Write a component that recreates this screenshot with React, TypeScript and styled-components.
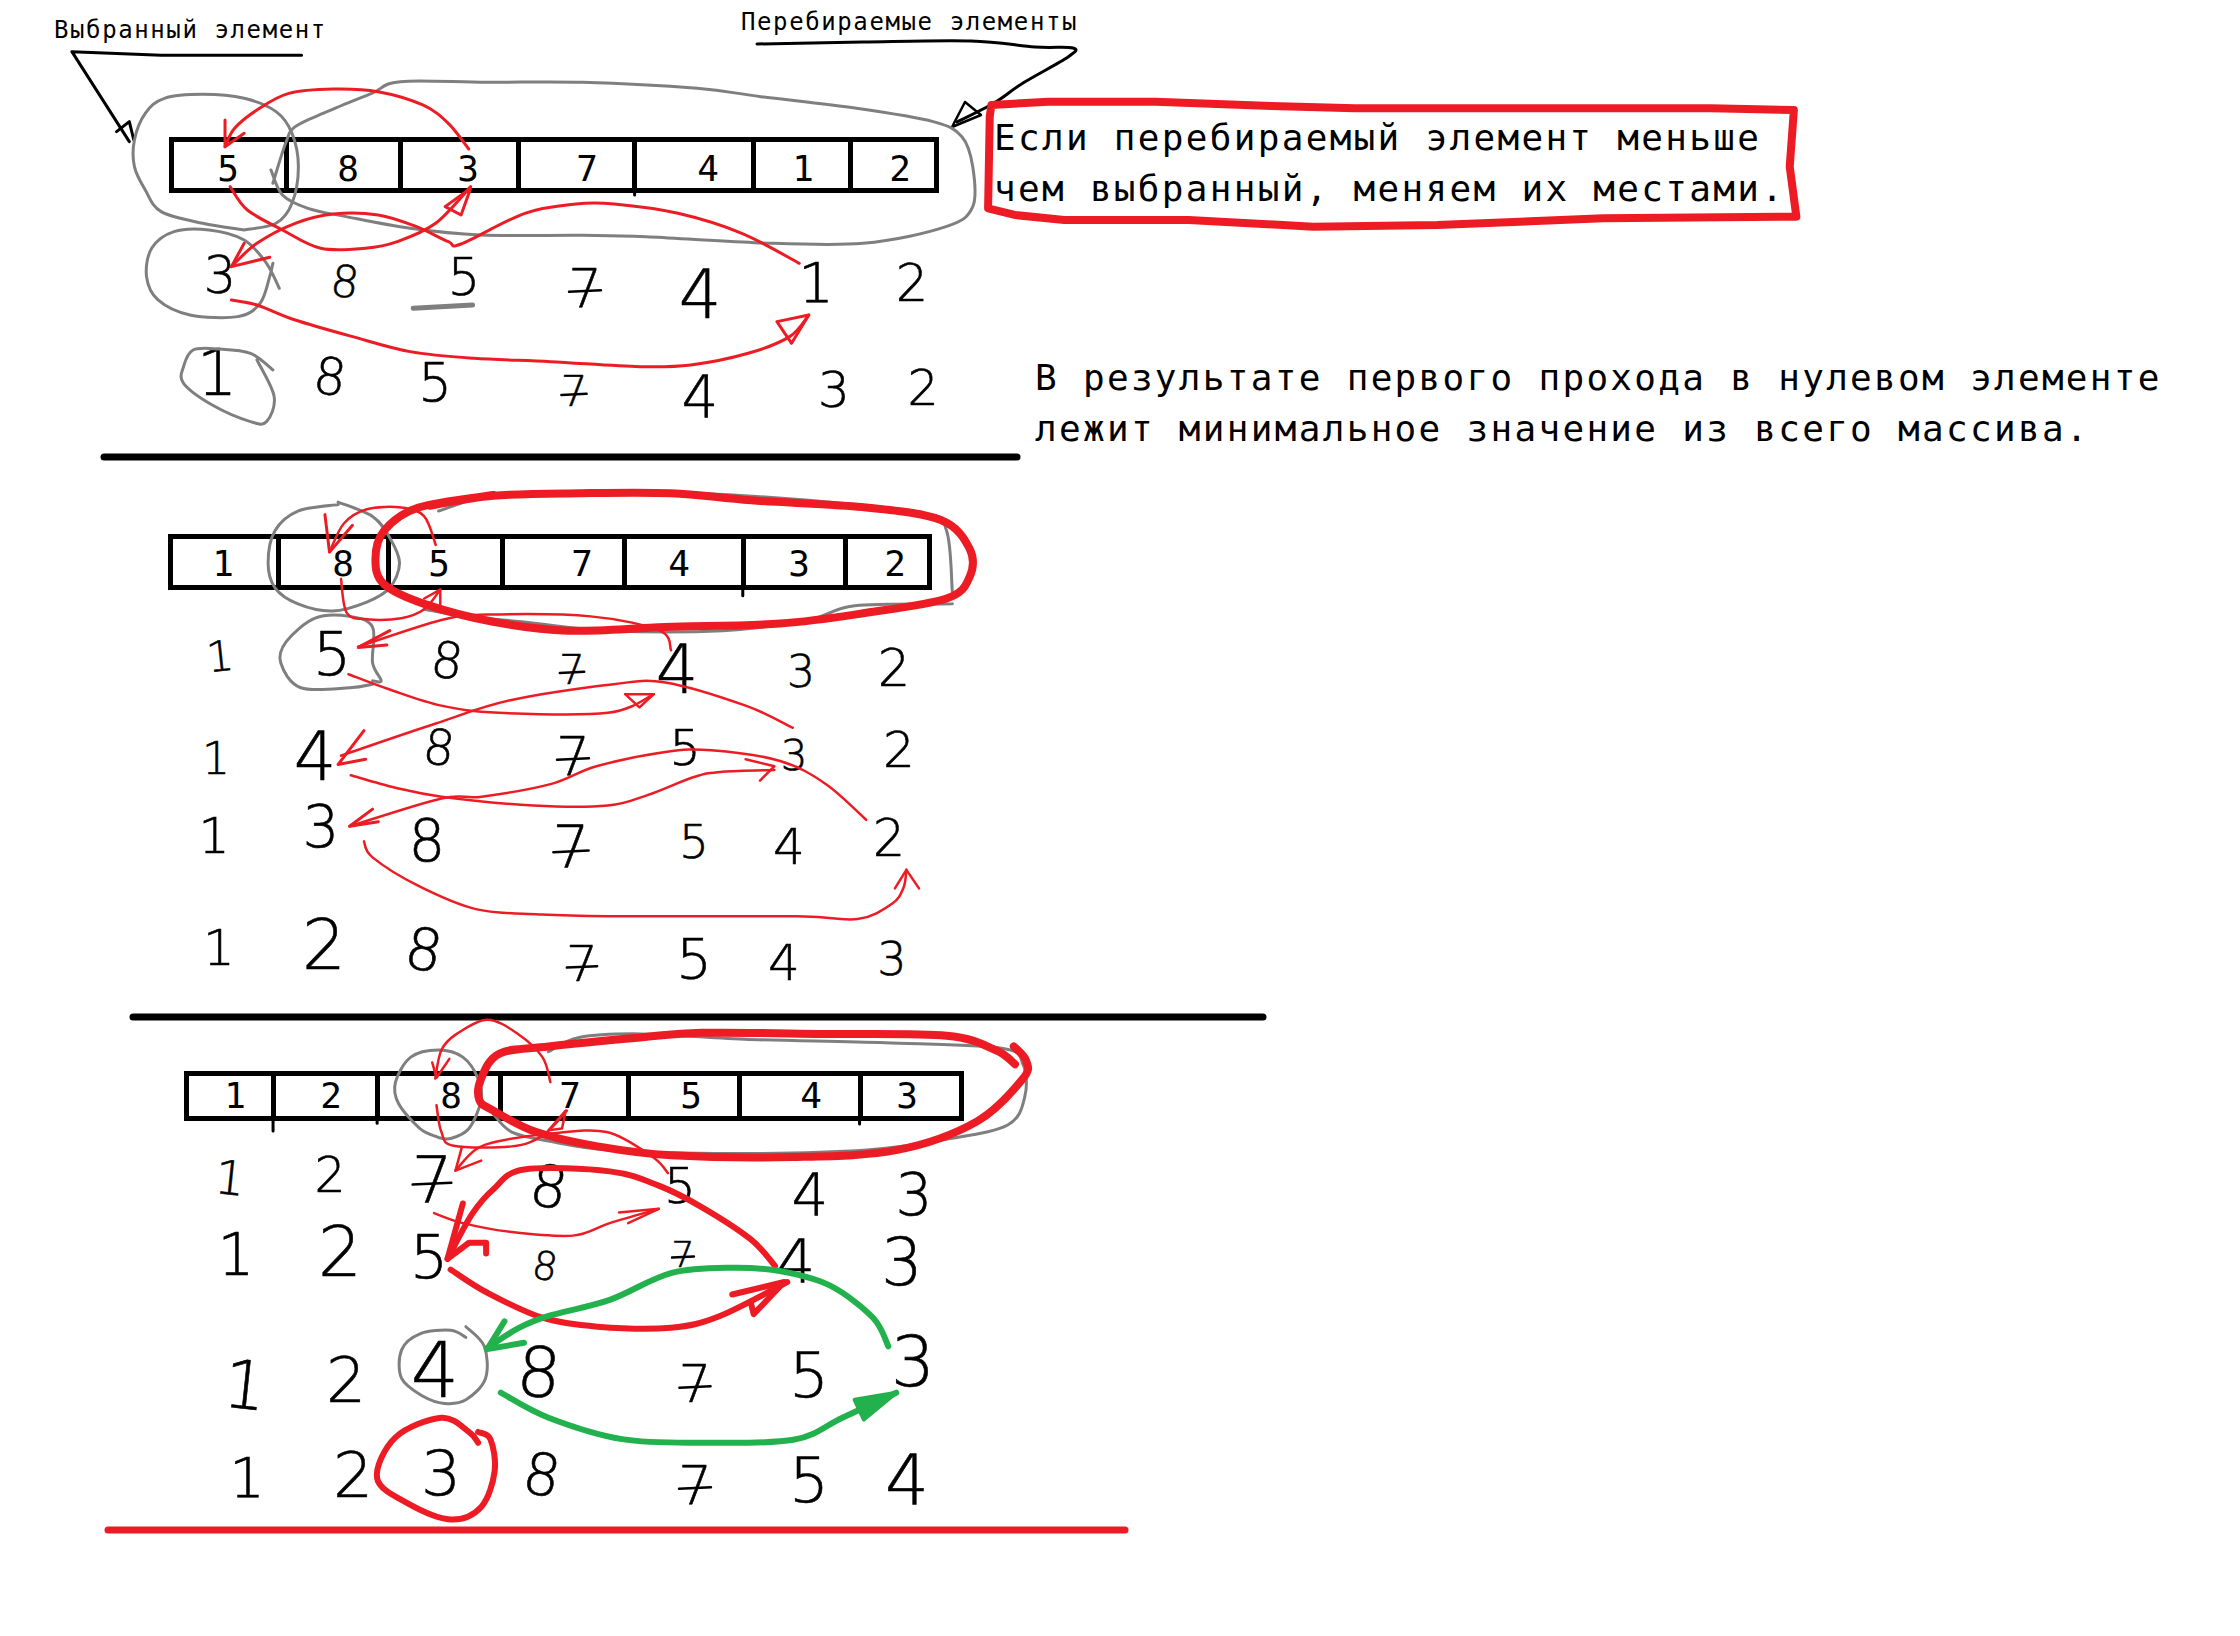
import React from 'react';
import styled, { createGlobalStyle } from 'styled-components';

const RED = '#ed1c24';
const GREEN = '#22b14c';
const GREY = '#7f7f7f';
const BLACK = '#000000';

type Pt = [number, number];
interface Stroke {
  c: string;
  w: number;
  p: Pt[];
  straight?: boolean;
  fill?: boolean;
}

// catmull-rom so the traced points come out like a mouse drawn line
const smooth = (p: Pt[]) => {
  let d = `M${p[0][0]} ${p[0][1]}`;
  for (let i = 0; i < p.length - 1; i++) {
    const a = p[i - 1] || p[i];
    const b = p[i];
    const c = p[i + 1];
    const e = p[i + 2] || c;
    d += ` C${b[0] + (c[0] - a[0]) / 6} ${b[1] + (c[1] - a[1]) / 6} ${c[0] - (e[0] - b[0]) / 6} ${c[1] - (e[1] - b[1]) / 6} ${c[0]} ${c[1]}`;
  }
  return d;
};
const straight = (p: Pt[]) => 'M' + p.map((q) => q.join(' ')).join(' L');

const head = (c: string, w: number, p: Pt[], fill = false): Stroke => ({ c, w, p, straight: true, fill });

// char, centre x, centre y, height, tilt
type Hand = [string, number, number, number, number?];
const handDigits: Hand[] = [
  ['3', 220, 275, 37], ['8', 345, 282, 32, 8], ['5', 464, 277, 37], ['7', 585, 288, 38], ['4', 700, 295, 48], ['1', 816, 283, 40], ['2', 912, 283, 37],
  ['1', 217, 373, 46], ['8', 330, 377, 37, 8], ['5', 435, 382, 38], ['7', 574, 392, 30], ['4', 700, 397, 42], ['3', 834, 390, 36], ['2', 923, 388, 35],
  ['1', 220, 657, 30, -6], ['5', 332, 654, 43], ['8', 447, 661, 36, 8], ['7', 572, 670, 29], ['4', 677, 670, 48], ['3', 801, 672, 32], ['2', 894, 668, 37],
  ['1', 216, 759, 32], ['4', 315, 757, 48], ['8', 439, 748, 35, 8], ['7', 573, 756, 38], ['5', 685, 748, 35], ['3', 794, 756, 30], ['2', 899, 750, 36],
  ['1', 214, 836, 35], ['3', 321, 827, 42], ['8', 427, 841, 42], ['7', 571, 848, 42], ['5', 694, 841, 34], ['4', 789, 847, 36], ['2', 889, 838, 37],
  ['1', 219, 948, 36], ['2', 324, 945, 50], ['8', 424, 950, 42, 10], ['7', 582, 964, 36], ['5', 694, 959, 40], ['4', 784, 963, 36], ['3', 892, 959, 33],
  ['1', 230, 1178, 34, 6], ['2', 330, 1175, 35], ['7', 432, 1180, 46], ['8', 549, 1187, 42, 10], ['5', 680, 1186, 36], ['4', 810, 1195, 42], ['3', 914, 1195, 42],
  ['1', 236, 1255, 42], ['2', 340, 1252, 50], ['5', 429, 1257, 43], ['8', 545, 1266, 28, 10], ['7', 683, 1255, 26], ['4', 796, 1261, 44], ['3', 902, 1262, 47],
  ['1', 245, 1386, 48, 6], ['2', 346, 1380, 45], ['4', 435, 1371, 55], ['8', 539, 1373, 50, 5], ['7', 695, 1384, 37], ['5', 809, 1375, 45], ['3', 913, 1362, 50],
  ['1', 247, 1478, 40], ['2', 353, 1475, 45], ['3', 441, 1473, 45], ['8', 542, 1475, 42, 10], ['7', 695, 1485, 38], ['5', 809, 1480, 45], ['4', 907, 1480, 50],
];

// the hand drawn sevens are crossed
const crossBars: Stroke[] = handDigits
  .filter((d) => d[0] === '7')
  .map(([, x, y, h]) => ({
    c: BLACK,
    w: 2.5,
    straight: true,
    p: [[x - h * 0.42, y + h * 0.1], [x + h * 0.42, y + h * 0.06]] as Pt[],
  }));

const fullStrokes: Stroke[] = [
  ...crossBars,
  { c: BLACK, w: 3, p: [[757, 44], [863, 42], [971, 41], [1035, 47], [1073, 48], [1068, 57], [1023, 83], [994, 103], [957, 122]] },
  head(BLACK, 2.5, [[965, 102], [952, 127], [981, 115], [965, 102]]),
  { c: BLACK, w: 7, straight: true, p: [[104, 457], [1017, 457]] },
  { c: BLACK, w: 7, straight: true, p: [[133, 1017], [1263, 1017]] },
  { c: RED, w: 7, straight: true, p: [[108, 1530], [1125, 1530]] },
];

const topStrokes: Stroke[] = [
  { c: BLACK, w: 3, straight: true, p: [[410, 166], [190, 166], [50, 155], [95, 290], [140, 425]] },
  head(BLACK, 3, [[120, 395], [140, 365], [147, 420]]),
  { c: BLACK, w: 3, straight: true, p: [[932, 575], [932, 585]] },
  { c: GREY, w: 3, p: [[320, 690], [255, 670], [190, 635], [165, 570], [148, 500], [148, 420], [165, 340], [195, 295], [255, 283], [320, 295], [370, 335], [395, 400], [405, 500], [395, 610], [370, 670], [320, 690]] },
  { c: GREY, w: 3, p: [[365, 550], [385, 430], [400, 380], [450, 335], [520, 280], [565, 245], [700, 247], [850, 247], [1030, 265], [1130, 290], [1280, 325], [1400, 365], [1445, 410], [1462, 500], [1462, 620], [1420, 680], [1290, 730], [1120, 728], [950, 710], [850, 706], [690, 705], [580, 685], [480, 650], [420, 625], [380, 585], [362, 510]] },
  { c: GREY, w: 3, p: [[375, 865], [355, 790], [320, 720], [265, 690], [210, 695], [175, 745], [167, 830], [185, 900], [235, 945], [310, 950], [345, 910], [360, 830], [365, 790]] },
  { c: GREY, w: 3, p: [[365, 1110], [330, 1060], [280, 1047], [240, 1050], [225, 1100], [225, 1150], [270, 1215], [330, 1265], [355, 1265], [367, 1190], [340, 1080]] },
  { c: GREY, w: 5, straight: true, p: [[585, 925], [678, 915]] },
  { c: RED, w: 3, p: [[672, 447], [640, 370], [600, 315], [530, 275], [460, 267], [390, 280], [340, 330], [305, 385], [290, 440]] },
  head(RED, 3, [[290, 360], [290, 440], [320, 400]]),
  { c: RED, w: 3, p: [[298, 560], [325, 630], [380, 690], [440, 745], [510, 745], [560, 725], [620, 670], [675, 560]] },
  head(RED, 3, [[635, 620], [675, 565], [660, 645], [635, 620]]),
  { c: RED, w: 3, p: [[1190, 790], [1100, 700], [1000, 640], [900, 612], [840, 612], [760, 640], [660, 732], [640, 725], [590, 680], [530, 645], [460, 642], [400, 670], [340, 730], [300, 800]] },
  head(RED, 3, [[320, 730], [300, 800], [360, 772]]),
  { c: RED, w: 3, p: [[300, 900], [340, 915], [400, 960], [490, 1010], [580, 1055], [680, 1075], [800, 1085], [940, 1100], [1020, 1095], [1110, 1060], [1175, 1010], [1205, 945]] },
  head(RED, 3, [[1155, 965], [1205, 945], [1178, 1030], [1155, 965]]),
];

const noteStrokes: Stroke[] = [
  { c: RED, w: 8, straight: true, p: [[60, 350], [62, 315], [130, 305], [260, 305], [400, 318], [500, 325], [930, 325], [1030, 330], [1025, 500], [1033, 650], [800, 655], [600, 675], [450, 680], [300, 660], [150, 660], [90, 645], [58, 625], [60, 350]] },
];

const midStrokes: Stroke[] = [
  { c: BLACK, w: 3, straight: true, p: [[1085, 330], [1085, 352]] },
  { c: GREY, w: 3, p: [[380, 90], [440, 130], [470, 190], [487, 260], [470, 330], [430, 370], [370, 395], [310, 375], [270, 330], [258, 260], [270, 170], [310, 115], [380, 97]] },
  { c: GREY, w: 3, p: [[555, 115], [650, 70], [800, 60], [1000, 65], [1200, 85], [1400, 120], [1440, 170], [1450, 340]] },
  { c: GREY, w: 3, p: [[1450, 375], [1280, 380], [1200, 420], [1050, 450], [850, 450], [700, 425], [600, 410], [530, 390]] },
  { c: GREY, w: 3, p: [[440, 590], [455, 590], [440, 540], [440, 440], [400, 410], [340, 415], [290, 480], [280, 540], [315, 610], [400, 610], [440, 600]] },
  { c: RED, w: 8, p: [[540, 100], [650, 72], [800, 65], [960, 65], [1100, 85], [1300, 105], [1430, 140], [1480, 220], [1480, 300], [1440, 360], [1300, 400], [1150, 430], [950, 440], [780, 450], [650, 425], [530, 375], [460, 320], [445, 250], [460, 170], [520, 105], [650, 70]] },
  { c: RED, w: 2.5, p: [[550, 210], [530, 130], [490, 105], [430, 110], [390, 150], [365, 230]] },
  head(RED, 3, [[357, 125], [365, 230], [405, 155]]),
  { c: RED, w: 2.5, p: [[385, 305], [395, 400], [430, 418], [490, 415], [530, 390], [558, 335]] },
  head(RED, 2.5, [[530, 360], [558, 335], [558, 390]]),
  { c: RED, w: 2.5, p: [[960, 505], [940, 450], [820, 410], [640, 405], [560, 420], [415, 495]] },
  head(RED, 3, [[470, 450], [415, 497], [465, 490]]),
  { c: RED, w: 2.5, p: [[398, 572], [470, 615], [560, 660], [660, 680], [850, 680], [930, 628]] },
  head(RED, 2.5, [[880, 628], [930, 628], [905, 665], [880, 628]]),
  { c: RED, w: 2.5, p: [[1172, 722], [1090, 660], [950, 595], [860, 600], [680, 645], [550, 710], [385, 800]] },
  head(RED, 3, [[425, 730], [380, 825], [428, 810]]),
  { c: RED, w: 2.5, p: [[402, 855], [480, 890], [560, 915], [720, 940], [850, 940], [920, 910], [1000, 860], [1050, 845], [1140, 840]] },
  head(RED, 2.5, [[1090, 810], [1140, 830], [1115, 870]]),
  { c: RED, w: 2.5, p: [[1300, 980], [1230, 880], [1150, 815], [1030, 785], [950, 790], [830, 830], [750, 880], [630, 915], [560, 920], [400, 998]] },
  head(RED, 3, [[440, 950], [400, 998], [450, 985]]),
  { c: RED, w: 2.5, p: [[425, 1040], [440, 1085], [520, 1165], [620, 1230], [730, 1245], [850, 1250], [1180, 1250], [1285, 1258], [1345, 1215], [1365, 1170], [1370, 1120]] },
  head(RED, 2.5, [[1350, 1172], [1370, 1120], [1392, 1172]]),
];

const lowStrokes: Stroke[] = [
  { c: BLACK, w: 3, straight: true, p: [[250, 330], [250, 367]] },
  { c: BLACK, w: 3, straight: true, p: [[420, 330], [420, 345]] },
  { c: BLACK, w: 3, straight: true, p: [[1208, 330], [1208, 347]] },
  { c: GREY, w: 3, p: [[520, 385], [490, 360], [455, 290], [450, 230], [475, 160], [520, 140], [560, 160], [585, 220], [590, 280], [570, 360], [540, 388], [520, 385]] },
  { c: GREY, w: 3, p: [[700, 145], [750, 105], [850, 95], [1020, 110], [1250, 120], [1440, 135], [1475, 180], [1478, 270], [1450, 350], [1350, 390], [1220, 420], [1000, 430], [800, 420], [700, 395], [640, 370], [610, 320]] },
  { c: GREY, w: 3, p: [[565, 915], [595, 970], [597, 1060], [565, 1120], [530, 1130], [495, 1110], [460, 1060], [460, 980], [490, 935], [540, 925], [565, 945]] },
  { c: RED, w: 2.5, p: [[703, 230], [690, 160], [650, 95], [600, 55], [550, 95], [525, 140], [515, 220]] },
  head(RED, 2.5, [[510, 175], [517, 218], [538, 165]]),
  { c: RED, w: 2.5, p: [[517, 295], [525, 370], [545, 408], [640, 410], [690, 380], [730, 310]] },
  head(RED, 2.5, [[700, 365], [728, 310], [722, 360], [700, 365]]),
  { c: RED, w: 2.5, p: [[895, 485], [870, 440], [795, 370], [700, 375], [620, 395], [580, 420], [548, 478]] },
  head(RED, 2.5, [[558, 415], [548, 478], [590, 450]]),
  { c: RED, w: 2.5, p: [[513, 597], [560, 625], [640, 650], [740, 660], [800, 625], [880, 585]] },
  head(RED, 2.5, [[815, 595], [880, 585], [830, 625]]),
  { c: RED, w: 8, p: [[1460, 130], [1480, 170], [1475, 220], [1400, 340], [1270, 420], [1100, 440], [900, 435], [780, 410], [680, 370], [610, 310], [587, 280], [590, 220], [620, 150], [700, 130], [850, 105], [950, 92], [1150, 95], [1350, 100], [1430, 140], [1462, 180]] },
  { c: RED, w: 6, p: [[1070, 745], [1030, 670], [950, 580], [880, 520], [800, 480], [660, 475], [610, 530], [575, 600], [535, 725]] },
  head(RED, 6, [[560, 570], [535, 725], [570, 680], [598, 680], [598, 710]]),
  { c: RED, w: 6, p: [[540, 755], [600, 820], [690, 890], [780, 915], [900, 918], [980, 885], [1090, 790]] },
  head(RED, 6, [[1000, 825], [1085, 790], [1035, 880], [1030, 845]]),
  { c: GREEN, w: 6, p: [[1255, 970], [1230, 890], [1160, 800], [1080, 760], [1000, 750], [900, 765], [800, 840], [700, 885], [650, 920], [600, 975]] },
  head(GREEN, 6, [[628, 900], [600, 978], [660, 960]]),
  { c: GREEN, w: 6, p: [[622, 1100], [700, 1170], [820, 1230], [950, 1240], [1100, 1232], [1180, 1170], [1268, 1100]] },
  head(GREEN, 4, [[1200, 1120], [1268, 1100], [1215, 1175], [1200, 1120]], true),
  { c: RED, w: 6, p: [[585, 1240], [570, 1210], [525, 1170], [450, 1225], [420, 1340], [470, 1410], [540, 1455], [590, 1420], [612, 1320], [605, 1230], [585, 1210]] },
];

const zones: { t: string; s: Stroke[] }[] = [
  { t: '', s: fullStrokes },
  { t: 'translate(40 0) scale(0.638 0.3333)', s: topStrokes },
  { t: 'translate(940 0) scale(0.829 0.3333)', s: noteStrokes },
  { t: 'translate(120 470) scale(0.574 0.357)', s: midStrokes },
  { t: 'translate(120 1000) scale(0.6122 0.357)', s: lowStrokes },
];

// value, cell width, digit centre inside the cell
type Cell = [string, number, number];
const arrays: { x: number; y: number; h: number; dy: number; cells: Cell[] }[] = [
  { x: 169, y: 137, h: 56, dy: 4, cells: [['5', 109.5, 54], ['8', 114, 59.5], ['3', 118, 65.5], ['7', 116, 66.5], ['4', 119, 71.5], ['1', 97, 47.5], ['2', 86.5, 47.5]] },
  { x: 168, y: 534, h: 56, dy: 2, cells: [['1', 102.5, 50], ['8', 110, 62.5], ['5', 114, 48.5], ['7', 122, 77.5], ['4', 119, 52.5], ['3', 102, 53.5], ['2', 84.5, 47.5]] },
  { x: 184, y: 1071, h: 50, dy: 0, cells: [['1', 81.5, 46], ['2', 104, 55.5], ['8', 123, 71.5], ['7', 128, 67.5], ['5', 111, 60.5], ['4', 121, 69.5], ['3', 101.5, 44.5]] },
];

const App = () => {
  return (
    <>
      <GlobalStyle />
      <Board>
        <Caption $x={54} $y={15}>Выбранный элемент</Caption>
        <Caption $x={741} $y={7}>Перебираемые элементы</Caption>
        <Note $x={994} $y={112}>
          Если перебираемый элемент меньше
          <br />
          чем выбранный, меняем их местами.
        </Note>
        <Note $x={1035} $y={352}>
          В результате первого прохода в нулевом элементе
          <br />
          лежит минимальное значение из всего массива.
        </Note>

        {arrays.map((a) => (
          <ArrayBox key={a.y} $x={a.x} $y={a.y} $h={a.h}>
            {a.cells.map(([v, w, c], i) => (
              <ArrayCell key={i} $w={w} $first={i === 0}>
                <CellValue $c={c} $dy={a.dy}>{v}</CellValue>
              </ArrayCell>
            ))}
          </ArrayBox>
        ))}

        {handDigits.map(([ch, x, y, h, tilt], i) => (
          <HandDigit key={i} $x={x} $y={y} $h={h} $tilt={tilt || 0}>
            {ch}
          </HandDigit>
        ))}

        <Sketch viewBox="0 0 2240 1636" fill="none" strokeLinecap="round" strokeLinejoin="round">
          {zones.map((z, i) => (
            <g key={i} transform={z.t}>
              {z.s.map((s, j) => (
                <path
                  key={j}
                  d={s.straight ? straight(s.p) : smooth(s.p)}
                  stroke={s.c}
                  strokeWidth={s.w}
                  fill={s.fill ? s.c : 'none'}
                  vectorEffect="non-scaling-stroke"
                />
              ))}
            </g>
          ))}
        </Sketch>
      </Board>
    </>
  );
};

const GlobalStyle = createGlobalStyle`
  html, body {
    margin: 0;
    background: #ffffff;
  }
`;

const Board = styled.div`
  position: relative;
  width: 2240px;
  height: 1636px;
  overflow: hidden;
  background: #ffffff;
  font-family: 'DejaVu Sans Mono', 'Liberation Mono', monospace;
  color: #000000;
`;

const Sketch = styled.svg`
  position: absolute;
  left: 0;
  top: 0;
  width: 2240px;
  height: 1636px;
  pointer-events: none;
`;

const Caption = styled.div<{ $x: number; $y: number }>`
  position: absolute;
  left: ${(p) => p.$x}px;
  top: ${(p) => p.$y}px;
  font-size: 24px;
  letter-spacing: 1.6px;
  line-height: 30px;
  white-space: nowrap;
`;

const Note = styled.div<{ $x: number; $y: number }>`
  position: absolute;
  left: ${(p) => p.$x}px;
  top: ${(p) => p.$y}px;
  font-size: 36px;
  letter-spacing: 2.3px;
  line-height: 51px;
  white-space: nowrap;
`;

const ArrayBox = styled.div<{ $x: number; $y: number; $h: number }>`
  position: absolute;
  left: ${(p) => p.$x}px;
  top: ${(p) => p.$y}px;
  height: ${(p) => p.$h}px;
  box-sizing: border-box;
  display: flex;
  border: 5px solid #000000;
`;

const ArrayCell = styled.div<{ $w: number; $first: boolean }>`
  position: relative;
  flex: none;
  width: ${(p) => p.$w}px;
  box-sizing: border-box;
  border-left: ${(p) => (p.$first ? 'none' : '5px solid #000000')};
`;

const CellValue = styled.span<{ $c: number; $dy: number }>`
  position: absolute;
  left: ${(p) => p.$c}px;
  top: calc(50% + ${(p) => p.$dy}px);
  transform: translate(-50%, -50%);
  font-size: 36px;
  line-height: 1;
`;

const HandDigit = styled.span<{ $x: number; $y: number; $h: number; $tilt: number }>`
  position: absolute;
  left: ${(p) => p.$x}px;
  top: ${(p) => p.$y}px;
  transform: translate(-50%, -50%) rotate(${(p) => p.$tilt}deg);
  font-family: 'DejaVu Sans', 'Open Sans', sans-serif;
  font-weight: 200;
  -webkit-text-stroke: 0.6px #000000;
  font-size: ${(p) => Math.round(p.$h / 0.72)}px;
  line-height: 1;
`;

export default App;
